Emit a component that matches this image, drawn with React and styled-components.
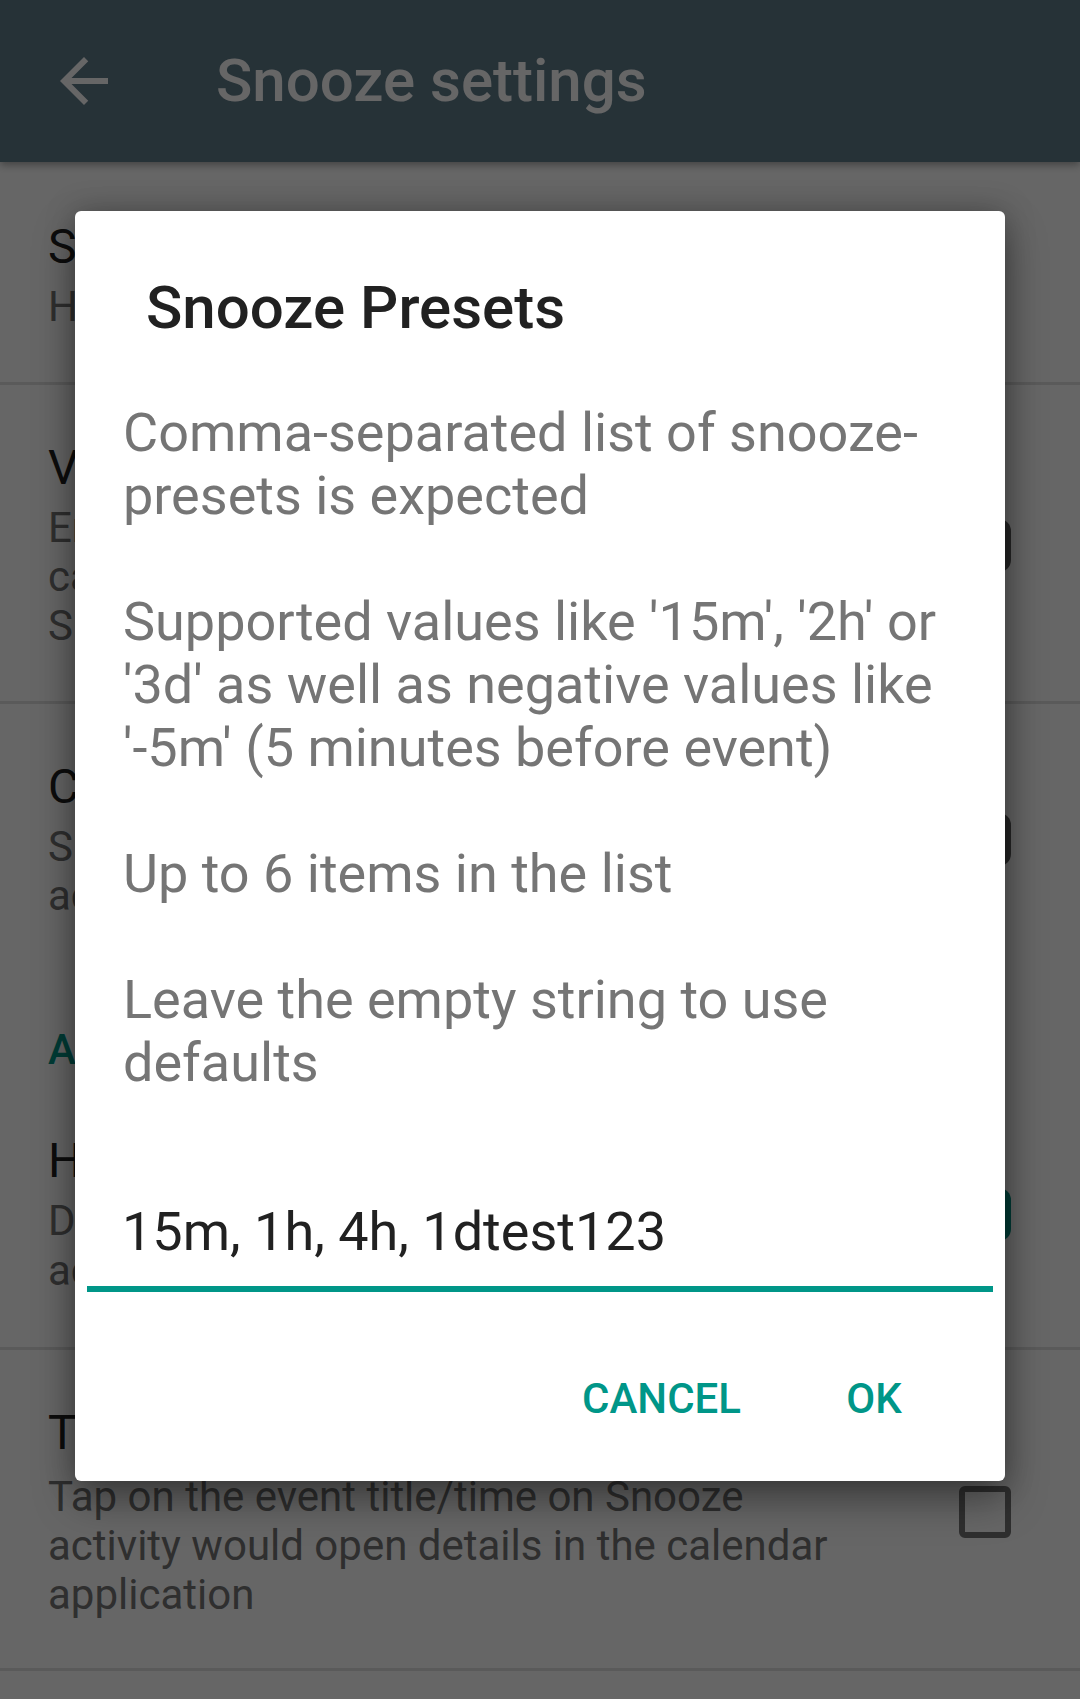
import React from "react";
import styled, { createGlobalStyle } from "styled-components";

const Global = createGlobalStyle`
  html, body { margin: 0; padding: 0; background: #ffffff; }
  body { font-family: Roboto, "Noto Sans", "Liberation Sans", sans-serif; }
  * { box-sizing: border-box; }
`;

const Screen = styled.div`
  position: relative;
  width: 1080px;
  height: 1699px;
  overflow: hidden;
  background: #ffffff;
`;

const Toolbar = styled.header`
  height: 162px;
  background: #607d8b;
  display: flex;
  align-items: center;
  padding-left: 48px;
  box-shadow: 0 3px 8px rgba(0, 0, 0, 0.35);
  position: relative;
  z-index: 1;
`;

const BackButton = styled.div`
  width: 72px;
  height: 72px;
  display: flex;
  align-items: center;
  justify-content: center;
`;

const ToolbarTitle = styled.h1`
  margin: 0 0 0 96px;
  font-size: 60px;
  font-weight: 500;
  color: #ffffff;
  line-height: 70px;
`;

const PrefList = styled.div`
  display: flex;
  flex-direction: column;
  padding-top: 2px;
`;

const PrefRow = styled.div`
  display: flex;
  align-items: center;
  padding: 55px 69px ${(p) => (p.$tall ? 49 : 51)}px 48px;
  border-bottom: ${(p) => (p.$divider ? "3px solid #e0e0e0" : "none")};
`;

const PrefText = styled.div`
  flex: 1;
  display: flex;
  flex-direction: column;
  gap: ${(p) => (p.$loose ? 11 : 7)}px;
`;

const PrefTitle = styled.div`
  font-size: 48px;
  line-height: 56px;
  color: #212121;
  white-space: nowrap;
`;

const PrefSummary = styled.div`
  font-size: 42px;
  line-height: ${(p) => (p.$loose ? 50 : 49)}px;
  color: #757575;
  white-space: nowrap;
`;

const Widget = styled.div`
  width: 112px;
  margin-left: 40px;
  display: flex;
  justify-content: flex-end;
`;

const SwitchTrack = styled.div`
  width: 112px;
  height: 53px;
  border-radius: 12px;
  background: ${(p) => (p.$on ? "#009688" : "#606060")};
`;

const CheckBox = styled.div`
  width: 52px;
  height: 52px;
  border: 6px solid #757575;
  border-radius: 6px;
`;

const Category = styled.div`
  padding: 54px 48px 4px 48px;
  font-size: 42px;
  line-height: 49px;
  font-weight: 500;
  color: #009688;
`;

const Scrim = styled.div`
  position: absolute;
  inset: 0;
  background: rgba(0, 0, 0, 0.6);
  z-index: 2;
  display: flex;
  justify-content: center;
  align-items: flex-start;
  padding-top: 211px;
`;

const Dialog = styled.div`
  width: 930px;
  height: 1270px;
  background: #ffffff;
  border-radius: 6px;
  box-shadow: 0 20px 40px rgba(0, 0, 0, 0.35), 0 0 30px rgba(0, 0, 0, 0.25);
  display: flex;
  flex-direction: column;
  padding-top: 62px;
`;

const DialogTitle = styled.h2`
  margin: 0;
  padding-left: 71px;
  font-size: 60px;
  line-height: 70px;
  font-weight: 500;
  color: #212121;
`;

const Message = styled.div`
  margin-top: 58px;
  padding: 0 0 0 48px;
  width: 887px;
  font-size: 54px;
  line-height: 63px;
  color: #757575;
  display: flex;
  flex-direction: column;
  gap: 63px;
`;

const Para = styled.p`
  margin: 0;
`;

const EditField = styled.div`
  margin: 106px 12px 0 12px;
  padding: 0 0 23px 35px;
  border-bottom: 6px solid #009688;
  font-size: 54px;
  line-height: 63px;
  color: #212121;
`;

const ButtonBar = styled.div`
  margin-top: 52px;
  display: flex;
  justify-content: flex-end;
  gap: 13px;
  padding-right: 35px;
`;

const TextButton = styled.button`
  min-width: 192px;
  height: 108px;
  padding: 0 24px;
  border: none;
  background: transparent;
  font-family: Roboto, "Noto Sans", "Liberation Sans", sans-serif;
  font-size: 42px;
  font-weight: 500;
  color: #009688;
  text-transform: uppercase;
  line-height: 49px;
`;

const ArrowBack = () => (
  <svg width="72" height="72" viewBox="0 0 24 24">
    <path
      fill="#ffffff"
      d="M20 11H7.83l5.59-5.59L12 4l-8 8 8 8 1.41-1.41L7.83 13H20v-2z"
    />
  </svg>
);

export default function App() {
  return (
    <Screen>
      <Global />
      <Toolbar>
        <BackButton>
          <ArrowBack />
        </BackButton>
        <ToolbarTitle>Snooze settings</ToolbarTitle>
      </Toolbar>
      <PrefList>
        <PrefRow $divider>
          <PrefText>
            <PrefTitle>Snooze presets</PrefTitle>
            <PrefSummary>How long to snooze: 15m, 1h, 4h, 1d</PrefSummary>
          </PrefText>
        </PrefRow>
        <PrefRow $divider>
          <PrefText>
            <PrefTitle>View after edit</PrefTitle>
            <PrefSummary>
              Enable to bring up the event in the
              <br />
              calendar after editing it from the
              <br />
              Snooze activity
            </PrefSummary>
          </PrefText>
          <Widget>
            <SwitchTrack />
          </Widget>
        </PrefRow>
        <PrefRow>
          <PrefText>
            <PrefTitle>Change all button</PrefTitle>
            <PrefSummary>
              Show 'Change All' button on Snooze
              <br />
              activity
            </PrefSummary>
          </PrefText>
          <Widget>
            <SwitchTrack />
          </Widget>
        </PrefRow>
        <Category>Advanced</Category>
        <PrefRow $divider>
          <PrefText>
            <PrefTitle>Hide snooze buttons</PrefTitle>
            <PrefSummary $loose>
              Do not show snooze preset buttons in
              <br />
              activity, use custom snooze only
            </PrefSummary>
          </PrefText>
          <Widget>
            <SwitchTrack $on />
          </Widget>
        </PrefRow>
        <PrefRow $divider $tall>
          <PrefText $loose>
            <PrefTitle>Tap to open in calendar</PrefTitle>
            <PrefSummary>
              Tap on the event title/time on Snooze
              <br />
              activity would open details in the calendar
              <br />
              application
            </PrefSummary>
          </PrefText>
          <Widget>
            <CheckBox />
          </Widget>
        </PrefRow>
      </PrefList>

      <Scrim>
        <Dialog>
          <DialogTitle>Snooze Presets</DialogTitle>
          <Message>
            <Para>Comma-separated list of snooze-presets is expected</Para>
            <Para>
              Supported values like '15m', '2h' or '3d' as well as negative
              values like '-5m' (5 minutes before event)
            </Para>
            <Para>Up to 6 items in the list</Para>
            <Para>Leave the empty string to use defaults</Para>
          </Message>
          <EditField>15m, 1h, 4h, 1dtest123</EditField>
          <ButtonBar>
            <TextButton>Cancel</TextButton>
            <TextButton>OK</TextButton>
          </ButtonBar>
        </Dialog>
      </Scrim>
    </Screen>
  );
}
